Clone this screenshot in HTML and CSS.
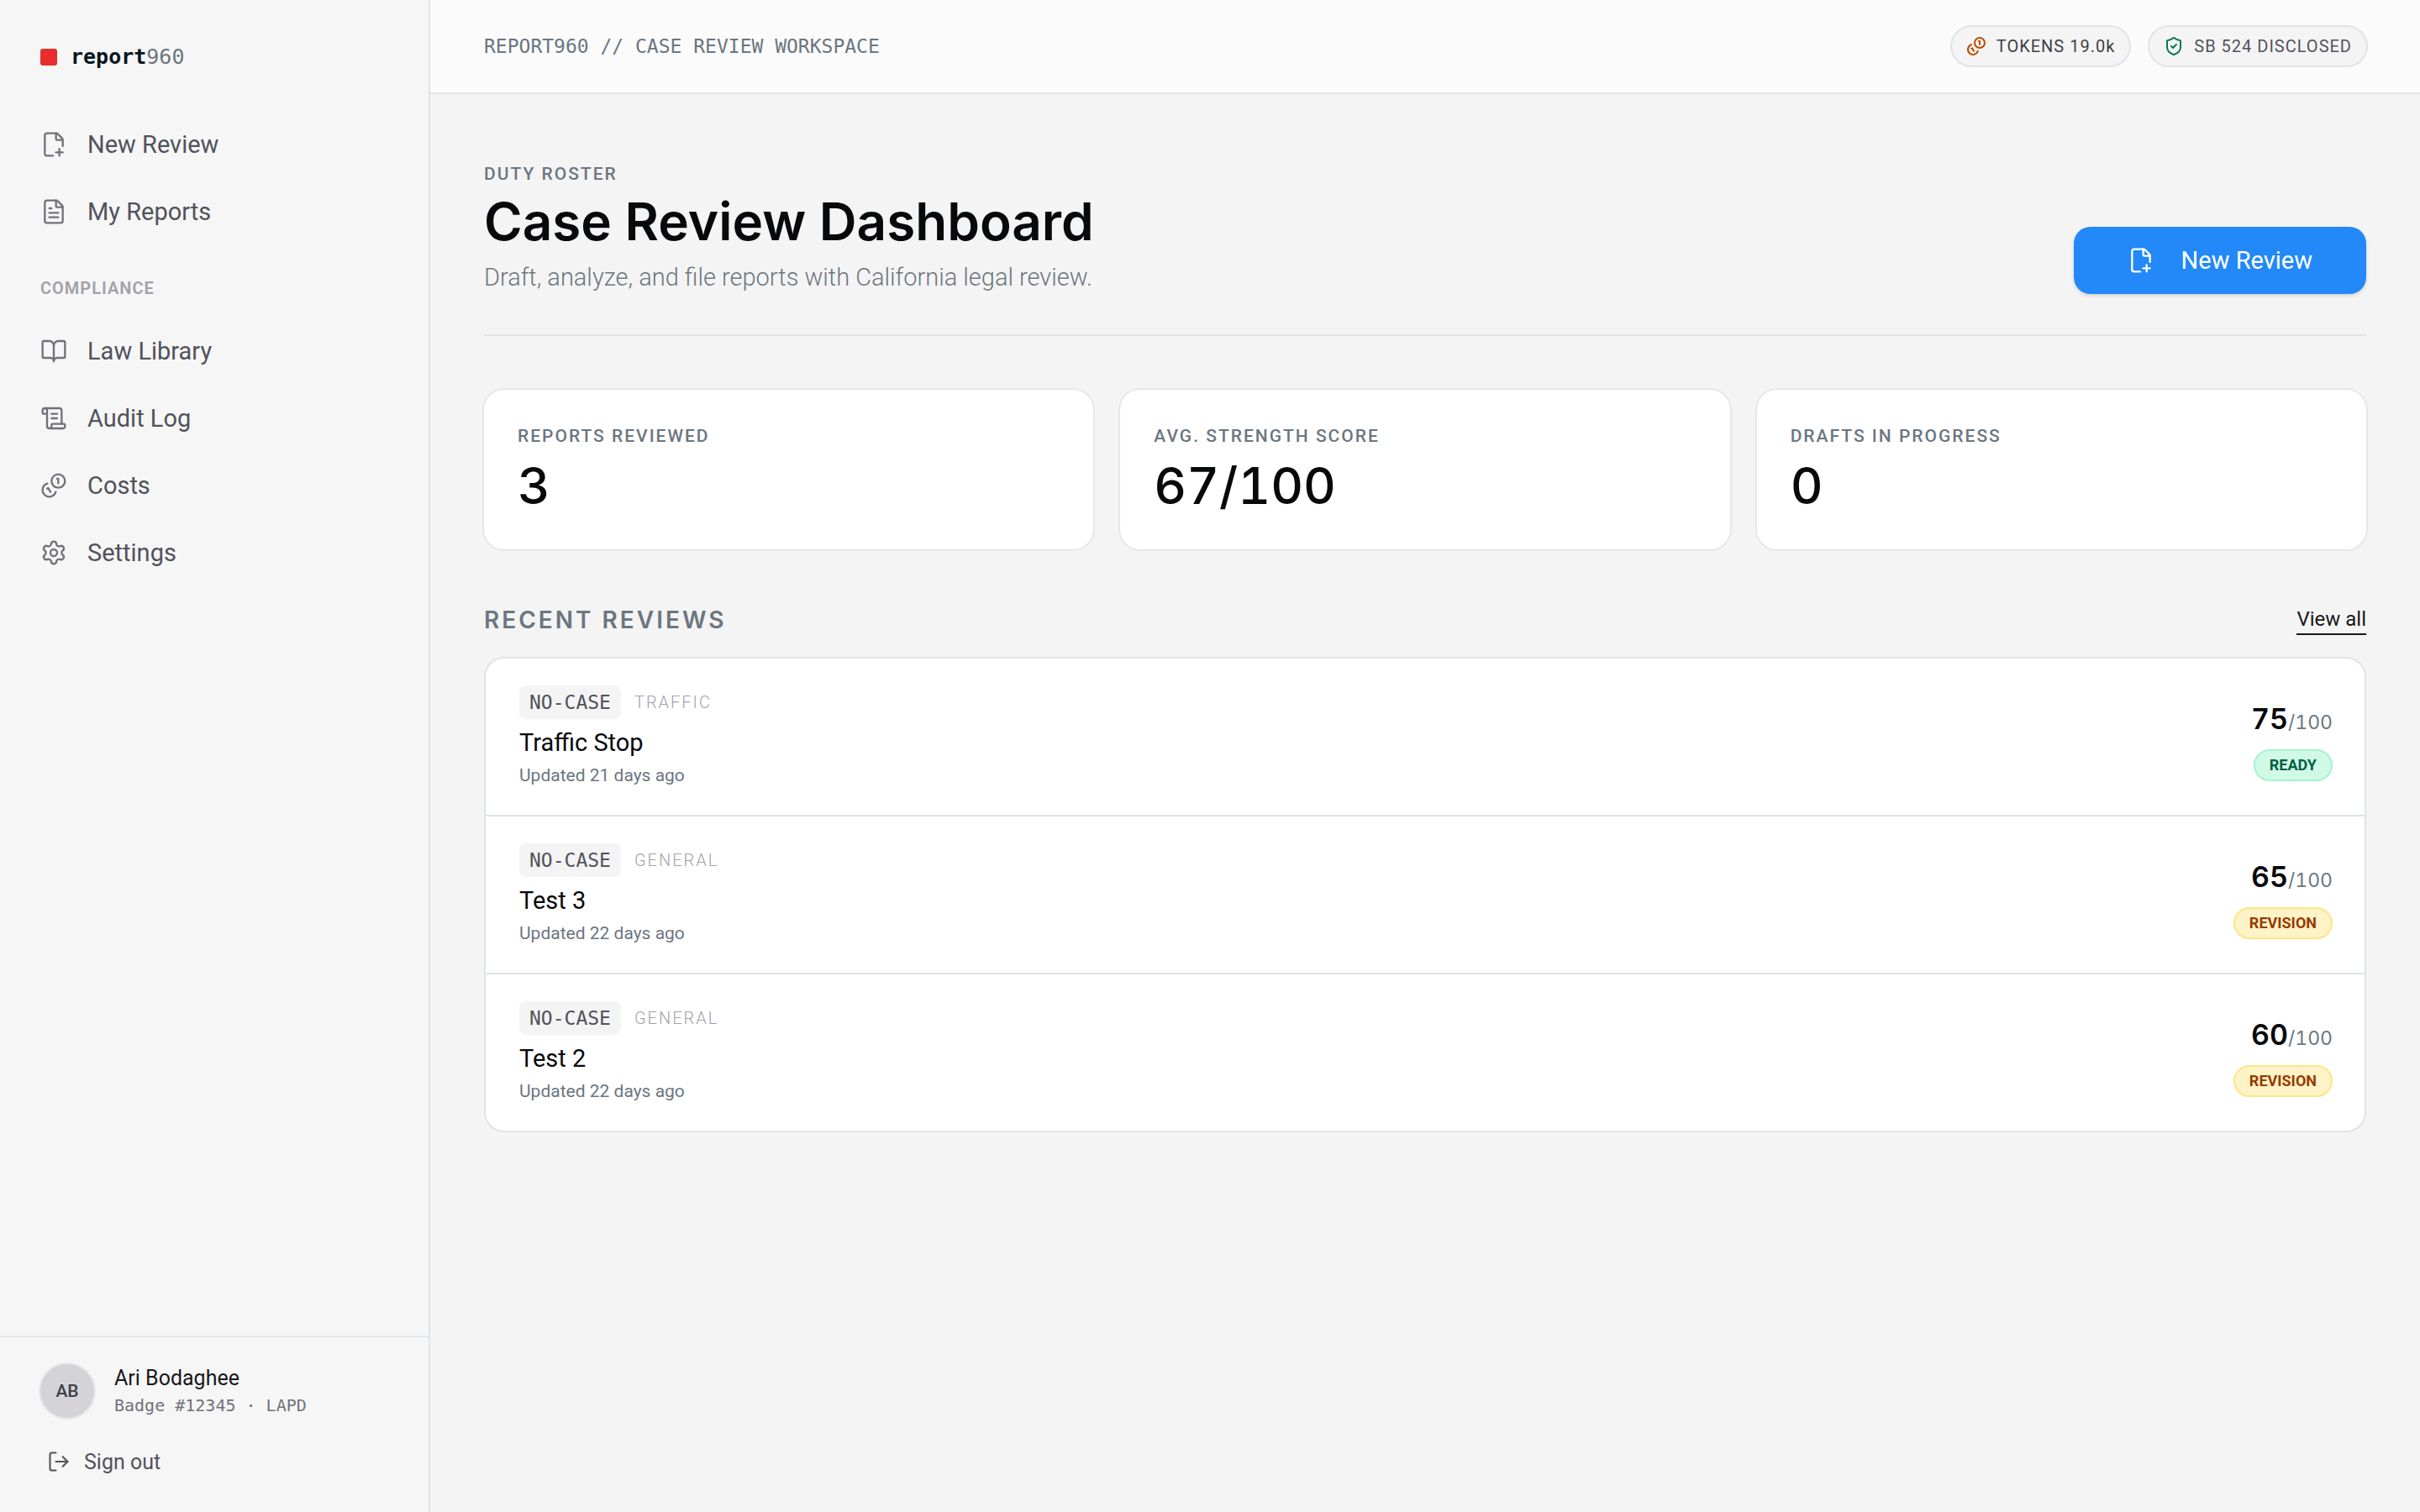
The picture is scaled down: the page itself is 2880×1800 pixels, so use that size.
FILE: index.html
```html
<!DOCTYPE html>
<html lang="en">
<head>
<meta charset="utf-8">
<meta name="viewport" content="width=device-width, initial-scale=1">
<title>Case Review Dashboard</title>
<link rel="stylesheet" href="styles.css">
</head>
<body>
<svg class="sprite" aria-hidden="true">
  <symbol id="i-file-plus" viewBox="0 0 24 24"><path d="M11.35 22H6a2 2 0 0 1-2-2V4a2 2 0 0 1 2-2h8a2.4 2.4 0 0 1 1.706.706l3.588 3.588A2.4 2.4 0 0 1 20 8v5.35"/><path d="M14 2v5a1 1 0 0 0 1 1h5"/><path d="M14 19h6"/><path d="M17 16v6"/></symbol>
  <symbol id="i-file-text" viewBox="0 0 24 24"><path d="M6 22a2 2 0 0 1-2-2V4a2 2 0 0 1 2-2h8a2.4 2.4 0 0 1 1.704.706l3.588 3.588A2.4 2.4 0 0 1 20 8v12a2 2 0 0 1-2 2z"/><path d="M14 2v5a1 1 0 0 0 1 1h5"/><path d="M10 9H8"/><path d="M16 13H8"/><path d="M16 17H8"/></symbol>
  <symbol id="i-book" viewBox="0 0 24 24"><path d="M12 7v14"/><path d="M3 18a1 1 0 0 1-1-1V4a1 1 0 0 1 1-1h5a4 4 0 0 1 4 4 4 4 0 0 1 4-4h5a1 1 0 0 1 1 1v13a1 1 0 0 1-1 1h-6a3 3 0 0 0-3 3 3 3 0 0 0-3-3z"/></symbol>
  <symbol id="i-scroll" viewBox="0 0 24 24"><path d="M15 12h-5"/><path d="M15 8h-5"/><path d="M19 17V5a2 2 0 0 0-2-2H4"/><path d="M8 21h12a2 2 0 0 0 2-2v-1a1 1 0 0 0-1-1H11a1 1 0 0 0-1 1v1a2 2 0 1 1-4 0V5a2 2 0 1 0-4 0v2a1 1 0 0 0 1 1h3"/></symbol>
  <symbol id="i-coins" viewBox="0 0 24 24"><path d="M13.744 17.736a6 6 0 1 1-7.48-7.48"/><path d="M15 6h1v4"/><path d="m6.134 14.768.866-.5 2 3.464"/><circle cx="16" cy="8" r="6"/></symbol>
  <symbol id="i-settings" viewBox="0 0 24 24"><path d="M9.671 4.136a2.34 2.34 0 0 1 4.659 0 2.34 2.34 0 0 0 3.319 1.915 2.34 2.34 0 0 1 2.33 4.033 2.34 2.34 0 0 0 0 3.831 2.34 2.34 0 0 1-2.33 4.033 2.34 2.34 0 0 0-3.319 1.915 2.34 2.34 0 0 1-4.659 0 2.34 2.34 0 0 0-3.32-1.915 2.34 2.34 0 0 1-2.33-4.033 2.34 2.34 0 0 0 0-3.831A2.34 2.34 0 0 1 6.35 6.051a2.34 2.34 0 0 0 3.319-1.915"/><circle cx="12" cy="12" r="3"/></symbol>
  <symbol id="i-shield" viewBox="0 0 24 24"><path d="M20 13c0 5-3.5 7.5-7.66 8.95a1 1 0 0 1-.67-.01C7.5 20.5 4 18 4 13V6a1 1 0 0 1 1-1c2 0 4.5-1.2 6.24-2.72a1.17 1.17 0 0 1 1.52 0C14.51 3.81 17 5 19 5a1 1 0 0 1 1 1z"/><path d="m9 12 2 2 4-4"/></symbol>
  <symbol id="i-logout" viewBox="0 0 24 24"><path d="m16 17 5-5-5-5"/><path d="M21 12H9"/><path d="M9 21H5a2 2 0 0 1-2-2V5a2 2 0 0 1 2-2h4"/></symbol>
</svg>
<div class="app">
  <aside class="sidebar">
    <div class="brand"><span class="brand-mark"></span><span class="brand-name">report<span class="brand-num">960</span></span></div>
    <nav class="nav">
      <a class="nav-link" href="#new"><svg class="icon"><use href="#i-file-plus"/></svg>New Review</a>
      <a class="nav-link" href="#reports"><svg class="icon"><use href="#i-file-text"/></svg>My Reports</a>
      <p class="nav-label">COMPLIANCE</p>
      <a class="nav-link" href="#law"><svg class="icon"><use href="#i-book"/></svg>Law Library</a>
      <a class="nav-link" href="#audit"><svg class="icon"><use href="#i-scroll"/></svg>Audit Log</a>
      <a class="nav-link" href="#costs"><svg class="icon"><use href="#i-coins"/></svg>Costs</a>
      <a class="nav-link" href="#settings"><svg class="icon"><use href="#i-settings"/></svg>Settings</a>
    </nav>
    <div class="account">
      <div class="profile">
        <span class="avatar">AB</span>
        <div>
          <p class="profile-name">Ari Bodaghee</p>
          <p class="profile-meta">Badge #12345 · LAPD</p>
        </div>
      </div>
      <button class="sign-out" type="button"><svg class="icon icon-md"><use href="#i-logout"/></svg>Sign out</button>
    </div>
  </aside>
  <div class="workspace">
    <header class="topbar">
      <p class="crumb">REPORT960 // CASE REVIEW WORKSPACE</p>
      <div class="pills">
        <span class="pill pill-tokens"><svg class="icon icon-sm"><use href="#i-coins"/></svg>TOKENS 19.0k</span>
        <span class="pill pill-law"><svg class="icon icon-sm"><use href="#i-shield"/></svg>SB 524 DISCLOSED</span>
      </div>
    </header>
    <main class="main">
      <section class="page-head">
        <div>
          <p class="eyebrow">DUTY ROSTER</p>
          <h1 class="title">Case Review Dashboard</h1>
          <p class="subtitle">Draft, analyze, and file reports with California legal review.</p>
        </div>
        <button class="primary" type="button"><svg class="icon"><use href="#i-file-plus"/></svg>New Review</button>
      </section>
      <section class="stats">
        <div class="stat"><p class="eyebrow">REPORTS REVIEWED</p><p class="stat-value">3</p></div>
        <div class="stat"><p class="eyebrow">AVG. STRENGTH SCORE</p><p class="stat-value">67/100</p></div>
        <div class="stat"><p class="eyebrow">DRAFTS IN PROGRESS</p><p class="stat-value">0</p></div>
      </section>
      <section class="recent">
        <div class="recent-head">
          <h2 class="recent-title">RECENT REVIEWS</h2>
          <a class="view-all" href="#all">View all</a>
        </div>
        <ul class="reviews">
          <li class="review">
            <div>
              <div class="tags"><span class="case">NO-CASE</span><span class="kind">TRAFFIC</span></div>
              <h3 class="review-title">Traffic Stop</h3>
              <p class="updated">Updated 21 days ago</p>
            </div>
            <div class="result"><p class="score">75<span class="score-max">/100</span></p><span class="badge badge-ready">READY</span></div>
          </li>
          <li class="review">
            <div>
              <div class="tags"><span class="case">NO-CASE</span><span class="kind">GENERAL</span></div>
              <h3 class="review-title">Test 3</h3>
              <p class="updated">Updated 22 days ago</p>
            </div>
            <div class="result"><p class="score">65<span class="score-max">/100</span></p><span class="badge badge-revision">REVISION</span></div>
          </li>
          <li class="review">
            <div>
              <div class="tags"><span class="case">NO-CASE</span><span class="kind">GENERAL</span></div>
              <h3 class="review-title">Test 2</h3>
              <p class="updated">Updated 22 days ago</p>
            </div>
            <div class="result"><p class="score">60<span class="score-max">/100</span></p><span class="badge badge-revision">REVISION</span></div>
          </li>
        </ul>
      </section>
    </main>
  </div>
</div>
</body>
</html>
```
FILE: styles.css
```css
:root {
  --line: #dfe4e8;
  --muted: #6b7680;
  --ink: #08090b;
  --sans: Roboto, "Liberation Sans", sans-serif;
  --display: Inter, "Liberation Sans", sans-serif;
  --mono: "DejaVu Sans Mono", "Liberation Mono", monospace;
}
* { box-sizing: border-box; }
body, p, h1, h2, h3, ul { margin: 0; padding: 0; }
body { font-family: var(--sans); font-size: 29px; color: var(--ink); background: #f4f4f4; }
button { font: inherit; border: 0; cursor: pointer; }
a { color: inherit; text-decoration: none; }
.sprite { display: none; }
.icon {
  flex: none; width: 32px; height: 32px; fill: none; stroke: currentColor;
  stroke-width: 1.75; stroke-linecap: round; stroke-linejoin: round;
}
.icon-md { width: 28px; height: 28px; }
.icon-sm { width: 24px; height: 24px; stroke-width: 2; }

.app { display: grid; grid-template-columns: 512px 1fr; min-height: 100vh; }

.sidebar { display: flex; flex-direction: column; background: #f6f6f6; border-right: 2px solid var(--line); }
.brand { display: flex; align-items: center; gap: 16px; padding: 48px 48px 52px; }
.brand-mark { width: 20px; height: 20px; border-radius: 3px; background: #e92c2c; }
.brand-name { font: 700 25px/40px var(--mono); color: #0c151d; }
.brand-num { font-weight: 400; color: var(--muted); }
.nav { flex: 1; display: flex; flex-direction: column; gap: 16px; padding: 0 48px; }
.nav-link { display: flex; align-items: center; gap: 24px; height: 64px; color: #52525b; }
.nav-link .icon { color: #71717a; }
.nav-label { margin: 28px 0 12px; font-size: 20px; line-height: 30px; font-weight: 600; letter-spacing: 1px; color: #a1a1aa; }
.account { padding: 32px 48px; border-top: 2px solid var(--line); }
.profile { display: flex; align-items: center; gap: 24px; }
.avatar {
  display: grid; place-items: center; width: 64px; height: 64px; border-radius: 50%;
  background: #d4d4d8; box-shadow: 0 0 0 2px #e8e8e9; font-size: 21px; font-weight: 500; color: #3f3f46;
}
.profile-name { font-size: 25px; line-height: 34px; color: #18181b; }
.profile-meta { font: 20px/30px var(--mono); color: #71717a; }
.sign-out {
  display: flex; align-items: center; gap: 16px; height: 56px; margin-top: 24px; padding: 0 8px;
  background: none; font-size: 25px; color: #52525b;
}

.topbar {
  display: flex; align-items: center; justify-content: space-between; height: 112px; padding: 0 64px;
  background: #fbfbfb; border-bottom: 2px solid var(--line);
}
.crumb { font: 23px/32px var(--mono); color: var(--muted); }
.pills { display: flex; gap: 24px; }
.pill {
  display: flex; align-items: center; gap: 12px; padding: 8px 17px; border-radius: 24px;
  background: #f4f4f4; box-shadow: 0 0 0 2px var(--line);
  font-size: 20px; line-height: 30px; letter-spacing: 1px; color: #52525b;
}
.pill-tokens { color: #3f3f46; }
.pill-tokens .icon { color: #bb4d00; }
.pill-law .icon { color: #007a55; }

.main { padding: 80px 64px; }
.page-head {
  display: flex; align-items: flex-end; justify-content: space-between;
  padding-bottom: 48px; border-bottom: 2px solid var(--line);
}
.eyebrow { font-size: 21px; line-height: 30px; font-weight: 500; letter-spacing: 2px; color: var(--muted); }
.title { margin-top: 4px; font: 600 62px/76px var(--display); }
.subtitle { margin-top: 8px; line-height: 40px; font-weight: 300; color: var(--muted); }
.primary {
  display: flex; align-items: center; gap: 32px; height: 80px; padding: 0 64px; border-radius: 20px;
  background: #2388f8; color: #fff; box-shadow: 0 2px 4px rgba(0, 0, 0, .14);
}
.stats { display: grid; grid-template-columns: repeat(3, 1fr); gap: 32px; margin-top: 64px; }
.stat { padding: 40px; border-radius: 24px; background: #fff; box-shadow: 0 0 0 2px #e7e7e7; }
.stat-value { margin-top: 8px; font: 500 60px/72px var(--display); font-variant-numeric: tabular-nums; }

.recent { margin-top: 64px; }
.recent-head { display: flex; align-items: center; justify-content: space-between; margin-bottom: 24px; }
.recent-title { font: 600 28px/40px var(--display); letter-spacing: 3px; color: var(--muted); }
.view-all { font-size: 24px; line-height: 34px; color: #18181b; border-bottom: 2px solid #18181b; }
.reviews { list-style: none; background: #fff; border: 2px solid var(--line); border-radius: 24px; }
.review { display: flex; align-items: center; justify-content: space-between; padding: 32px 38px 32px 40px; }
.review + .review { border-top: 2px solid var(--line); }
.tags { display: flex; align-items: center; gap: 16px; }
.case { padding: 0 12px; border-radius: 8px; background: #f4f4f4; font: 23px/40px var(--mono); color: #52525b; }
.kind { font-size: 20px; font-weight: 300; letter-spacing: 2px; color: #a1a1aa; }
.review-title { margin-top: 8px; font-size: 29px; line-height: 40px; font-weight: 400; }
.updated { margin-top: 4px; font-size: 21px; line-height: 30px; color: var(--muted); }
.result { display: flex; flex-direction: column; align-items: flex-end; gap: 4px; }
.score { font: 600 34px/64px var(--display); font-variant-numeric: tabular-nums; }
.score-max { font-size: 23px; line-height: 1; font-weight: 400; color: var(--muted); }
.badge { padding: 0 17px; border: 2px solid; border-radius: 20px; font-size: 18px; line-height: 34px; font-weight: 700; }
.badge-ready { background: #d0fae5; border-color: #a4f4cf; color: #006045; }
.badge-revision { background: #fef3c6; border-color: #fee685; color: #973c00; }
```
